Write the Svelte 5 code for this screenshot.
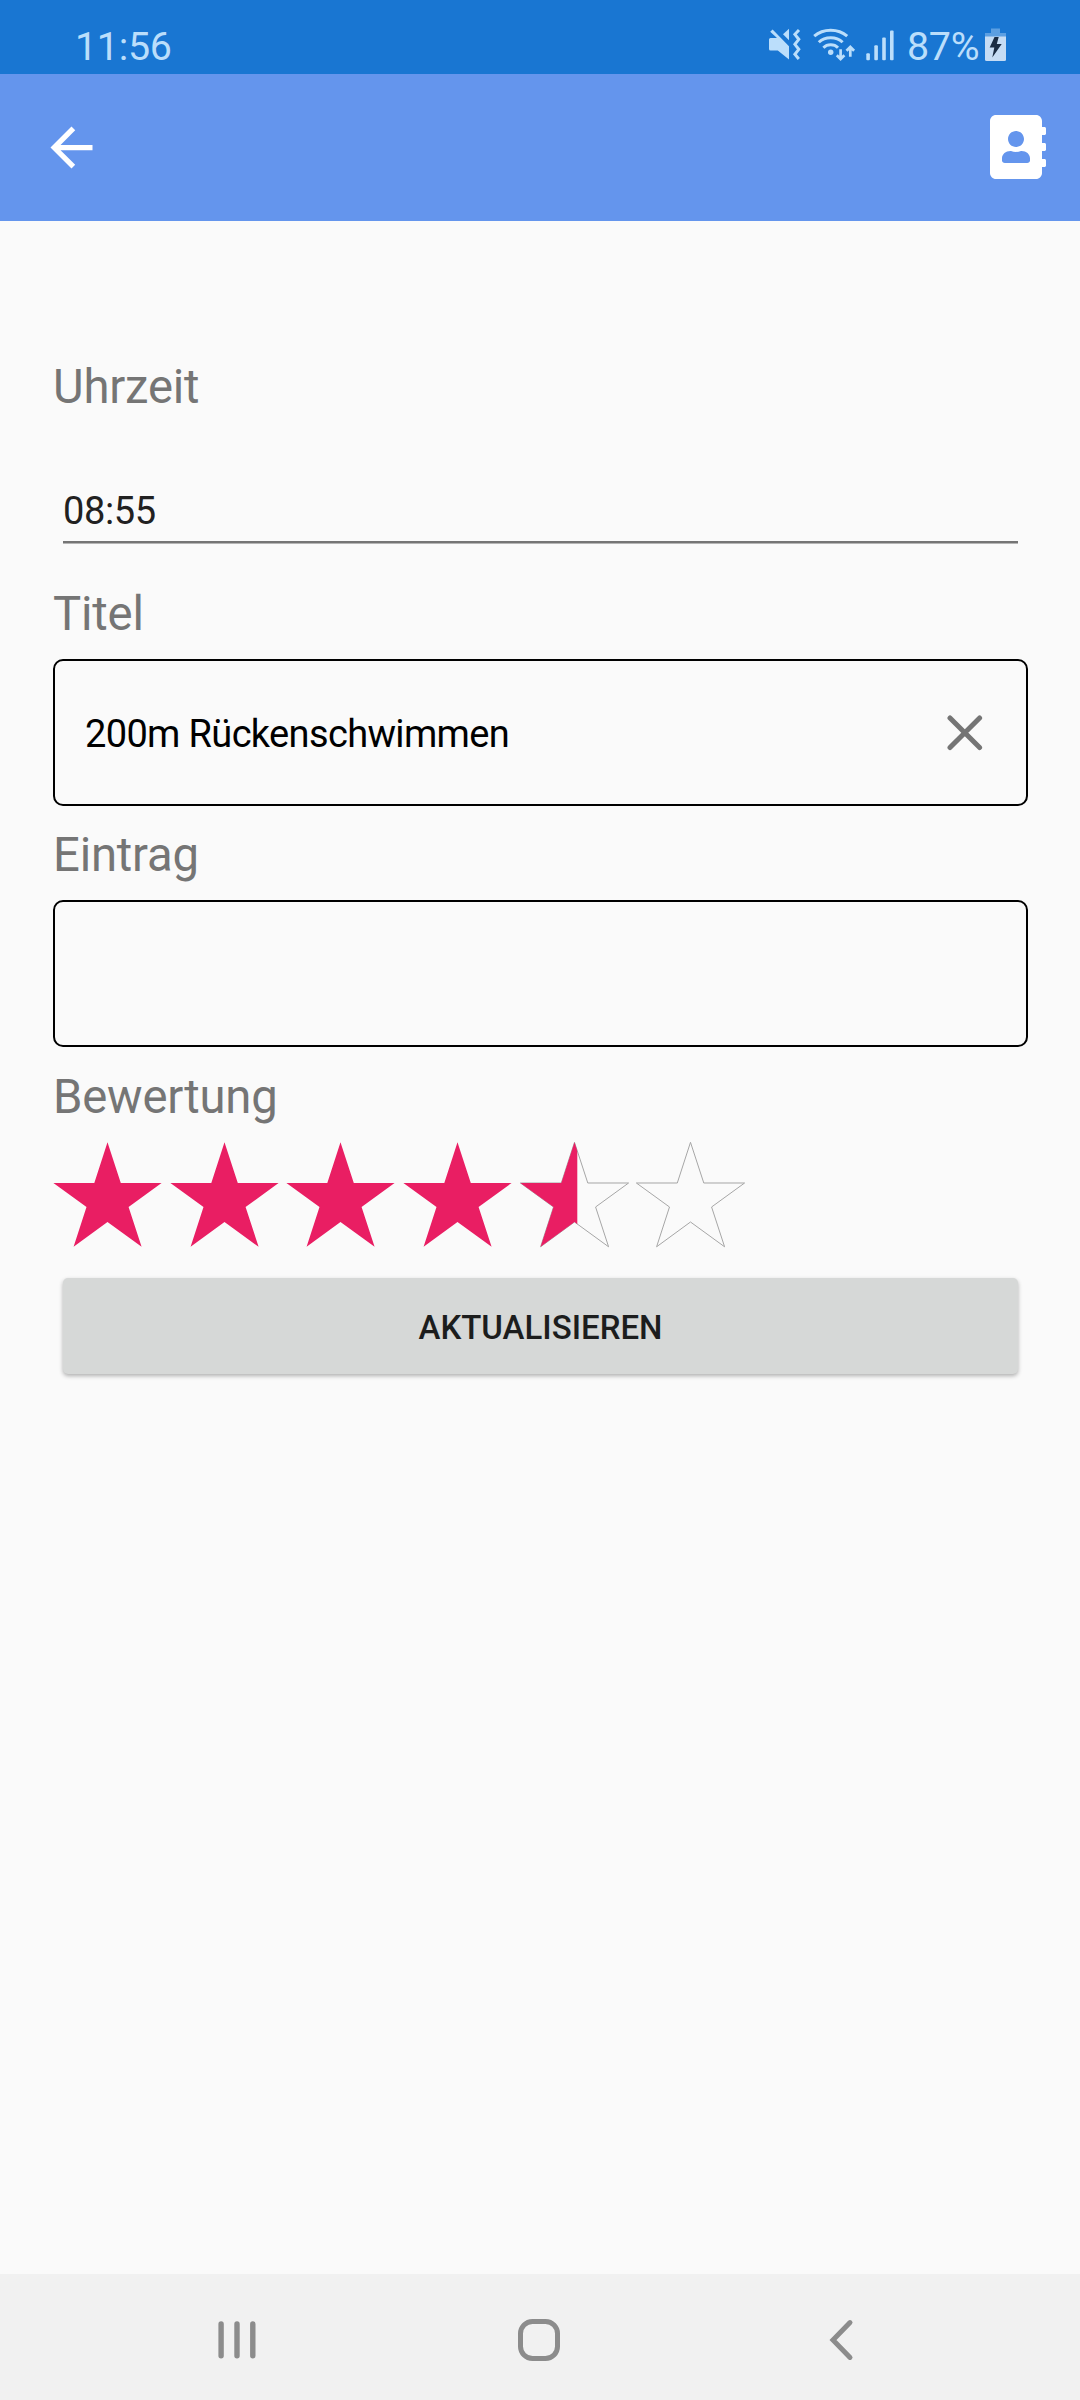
<script>
    let time = $state('08:55');
    let title = $state('200m Rückenschwimmen');
    let entry = $state('');
    let rating = $state(4.5);

    const stars = [0, 1, 2, 3, 4, 5];
    const starPoints = '54.5,1.3 67.8,42 108.6,42 75.6,66 88.6,105.8 54.5,81 20.6,105.8 33.5,66 0.4,42 41.3,42';

    function fillWidth(index) {
        return Math.max(0, Math.min(1, rating - index)) * 114.6;
    }
</script>

<div class="screen">
    <div class="status-bar">
        <span class="clock">11:56</span>
        <div class="status-icons">
            <svg class="mute" width="32" height="36" viewBox="0 0 32 36">
                <path d="M1.5 12H8L1.2 5.8L3.6 3.6L20 20.2V33.6L8.8 24.6H1.5Q0 24.6 0 23V13.5Q0 12 1.5 12Z" fill="currentColor"/>
                <path d="M14 8.2L20 2.8V14.2Z" fill="currentColor"/>
                <path d="M30 4L25.9 8.3L29.8 13.3L25.9 18.3L29.8 23.3L25.9 28.3L29.8 33" fill="none" stroke="currentColor" stroke-width="3"/>
            </svg>
            <svg class="wifi" width="43" height="36" viewBox="0 0 43 36">
                <g fill="none" stroke="currentColor" stroke-width="3">
                    <path d="M1.2 10.2Q8 4.2 17.7 4.2T34.2 10.2"/>
                    <path d="M5.8 16.3Q10.5 11.7 17.7 11.7T29.6 16.3"/>
                    <path d="M10.4 21.7Q13.3 18.8 17.7 18.8T25 21.7"/>
                    <path d="M27.6 23.3V33M23.8 29.2L27.6 33L31.4 29.2" stroke-width="2.7"/>
                    <path d="M37.3 30.8V21M33.5 24.8L37.3 21L41.1 24.8" stroke-width="2.7"/>
                </g>
                <circle cx="17.7" cy="26.3" r="2.7" fill="currentColor"/>
            </svg>
            <svg class="signal" width="28" height="36" viewBox="0 0 28 36" fill="currentColor">
                <rect x="0.3" y="27.3" width="3.6" height="7" rx="1"/>
                <rect x="8.3" y="19.3" width="3.6" height="15" rx="1"/>
                <rect x="16.2" y="11.6" width="3.6" height="22.7" rx="1"/>
                <rect x="24" y="4.6" width="3.6" height="29.7" rx="1"/>
            </svg>
            <span class="percent">87%</span>
            <svg class="battery" width="21" height="36" viewBox="0 0 21 36">
                <path d="M6 2.5H15V7H21V11H0V7H6Z" fill="#5c9fe2"/>
                <path d="M0 10.5H21V33.5Q21 35 19.5 35H1.5Q0 35 0 33.5Z" fill="#c6dcf4"/>
                <path d="M9.5 11H13.7L11.8 18H16.7L7.3 31.5L9.3 21.5H4.7Z" fill="#1a2c44"/>
            </svg>
        </div>
    </div>

    <header class="toolbar">
        <button class="icon-btn" aria-label="Zurück">
            <svg width="63" height="63" viewBox="0 0 24 24" fill="currentColor">
                <path d="M20 11H7.83l5.59-5.59L12 4l-8 8 8 8 1.41-1.41L7.83 13H20v-2z"/>
            </svg>
        </button>
        <button class="icon-btn" aria-label="Kontakte">
            <svg width="56" height="64" viewBox="0 0 448 512" fill="currentColor">
                <path d="M436 160c6.6 0 12-5.4 12-12v-40c0-6.6-5.4-12-12-12h-20V48c0-26.5-21.5-48-48-48H48C21.5 0 0 21.5 0 48v416c0 26.5 21.5 48 48 48h320c26.5 0 48-21.5 48-48v-48h20c6.6 0 12-5.4 12-12v-40c0-6.6-5.4-12-12-12h-20v-64h20c6.6 0 12-5.4 12-12v-40c0-6.6-5.4-12-12-12h-20v-64h20zm-228-32c35.3 0 64 28.7 64 64s-28.7 64-64 64-64-28.7-64-64 28.7-64 64-64zm112 236.8c0 10.6-10 19.2-22.4 19.2H118.4C106 384 96 375.4 96 364.8v-19.2c0-31.8 30.1-57.6 67.2-57.6h5c12.3 5.1 25.7 8 39.8 8s27.6-2.9 39.8-8h5c37.1 0 67.2 25.8 67.2 57.6v19.2z"/>
            </svg>
        </button>
    </header>

    <main class="form">
        <label class="label" for="time">Uhrzeit</label>
        <input id="time" class="time-input" type="text" bind:value={time}/>

        <label class="label title-label" for="title">Titel</label>
        <div class="box">
            <input id="title" type="text" bind:value={title}/>
            {#if title}
                <button class="icon-btn clear-btn" aria-label="Löschen" onclick={() => (title = '')}>
                    <svg width="36" height="36" viewBox="0 0 36 36" fill="none" stroke="currentColor" stroke-width="5" stroke-linecap="round">
                        <path d="M3 3L32.6 32.6M32.6 3L3 32.6"/>
                    </svg>
                </button>
            {/if}
        </div>

        <label class="label entry-label" for="entry">Eintrag</label>
        <div class="box">
            <input id="entry" type="text" bind:value={entry}/>
        </div>

        <div class="label rating-label">Bewertung</div>
        <div class="rating">
            {#each stars as star}
                <svg class="star" viewBox="0 0 116.67 108">
                    <clipPath id="star-fill-{star}">
                        <rect x="0" y="0" width={fillWidth(star)} height="108"/>
                    </clipPath>
                    {#if rating < star + 1}
                        <polygon points={starPoints} fill="none" stroke="#a6a6a6" stroke-width="1"/>
                    {/if}
                    <polygon points={starPoints} fill="#e91e63" clip-path="url(#star-fill-{star})"/>
                </svg>
            {/each}
        </div>

        <button class="submit">AKTUALISIEREN</button>
    </main>

    <nav class="nav-bar">
        <svg width="44" height="44" viewBox="0 0 44 44" fill="none" stroke="currentColor" stroke-width="5.4" stroke-linecap="round">
            <path d="M6.1 6V37.8M22 6V37.8M37.8 6V37.8"/>
        </svg>
        <svg width="44" height="44" viewBox="0 0 44 44" fill="none" stroke="currentColor" stroke-width="5">
            <rect x="3.5" y="3.5" width="37" height="37" rx="12"/>
        </svg>
        <svg width="44" height="44" viewBox="0 0 44 44" fill="none" stroke="currentColor" stroke-width="5" stroke-linecap="round">
            <path d="M31 4.6L14 22L31 39.4"/>
        </svg>
    </nav>
</div>

<style>
    :global(body) {
        margin: 0;
        background-color: #fafafa;
    }

    .screen {
        display: flex;
        flex-direction: column;
        width: 1080px;
        height: 2400px;
        background-color: #fafafa;
        font-family: Roboto, sans-serif;
        overflow: hidden;
    }

    svg {
        display: block;
        flex-shrink: 0;
    }

    button,
    input {
        margin: 0;
        padding: 0;
        border: none;
        outline: none;
        background: transparent;
        font-family: inherit;
    }

    .status-bar {
        display: flex;
        justify-content: space-between;
        box-sizing: border-box;
        height: 74px;
        padding: 26px 74px 0 75px;
        background-color: #1976d2;
        color: #bbdefb;
        font-size: 39.4px;
        letter-spacing: -0.3px;
        line-height: 41px;
    }

    .status-icons {
        display: flex;
    }

    .wifi {
        margin-left: 12px;
    }

    .signal {
        margin-left: 10px;
    }

    .percent {
        width: 73px;
        margin-left: 13px;
        white-space: nowrap;
    }

    .battery {
        margin-left: 5px;
    }

    .toolbar {
        display: flex;
        align-items: center;
        justify-content: space-between;
        box-sizing: border-box;
        height: 147px;
        padding: 0 34px 1px 40px;
        background-color: #6495ed;
        color: #fff;
    }

    .icon-btn {
        display: flex;
        color: inherit;
    }

    .form {
        display: flex;
        flex: 1;
        flex-direction: column;
        padding: 134px 52px 0 53px;
    }

    .label {
        height: 64px;
        color: #757575;
        font-size: 47.25px;
        letter-spacing: -0.2px;
        line-height: 64px;
    }

    .time-input {
        height: 48px;
        margin: 0 10px;
        padding: 68px 0 6px;
        border-bottom: 2px solid #757575;
        box-shadow: 0 1px 0 #b5b5b5;
        color: #212121;
        font-size: 38px;
        letter-spacing: -0.4px;
        line-height: 48px;
    }

    .title-label {
        margin-top: 39px;
    }

    .entry-label {
        margin-top: 17px;
    }

    .rating-label {
        margin-top: 18px;
    }

    .box {
        display: flex;
        align-items: center;
        box-sizing: border-box;
        height: 147px;
        margin-top: 13px;
        padding: 0 43px 0 30px;
        border: 2px solid #000;
        border-radius: 10px;
    }

    .box input {
        flex: 1;
        min-width: 0;
        height: 48px;
        padding-top: 2px;
        color: #000;
        font-size: 38px;
        letter-spacing: -0.65px;
        line-height: 48px;
    }

    .clear-btn {
        color: #757575;
    }

    .rating {
        display: flex;
        margin-top: 12px;
    }

    .star {
        width: 116.67px;
        height: 108px;
    }

    .submit {
        height: 96px;
        margin: 29px 10px 0;
        padding-top: 2px;
        border-radius: 5px;
        background-color: #d6d8d7;
        box-shadow: 0 2px 4px rgba(0, 0, 0, 0.3);
        color: #1c1d1d;
        font-size: 33px;
        font-weight: 500;
    }

    .nav-bar {
        display: grid;
        grid-template-columns: repeat(3, 302px);
        align-items: center;
        justify-items: center;
        box-sizing: border-box;
        height: 126px;
        padding: 6px 0 0 86px;
        background-color: #f1f1f1;
        color: #8c8c8c;
    }
</style>
